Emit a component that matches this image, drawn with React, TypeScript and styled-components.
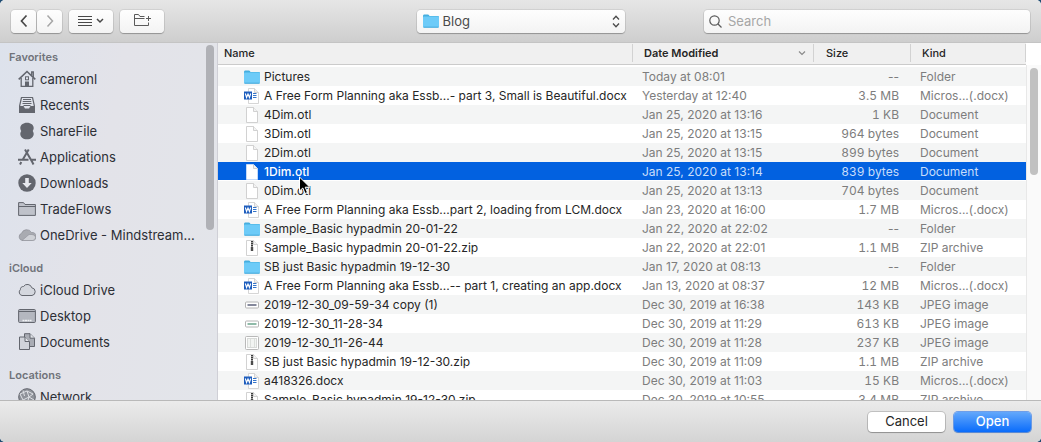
import React from "react";
import styled, { createGlobalStyle, css } from "styled-components";

const GlobalStyle = createGlobalStyle`
  * { box-sizing: border-box; }
  body {
    margin: 0;
    background: #1f4c72;
    font-family: Inter, "Liberation Sans", sans-serif;
    font-size: 12px;
    color: #262626;
  }
  button, select, input { font: inherit; color: inherit; margin: 0; }
  svg { display: block; flex: none; }
`;

const Dialog = styled.main`
  display: flex;
  flex-direction: column;
  height: 100vh;
  overflow: hidden;
  border-radius: 5px;
  background: #fff;
`;

const Toolbar = styled.header`
  display: grid;
  grid-template-columns: 1fr 208px 1fr;
  align-items: center;
  flex: none;
  height: 43px;
  padding: 0 11px;
  background: linear-gradient(#e6e6e6, #cecece);
  border-bottom: 1px solid #c4c4c4;
`;

const ToolGroup = styled.div`
  display: flex;
  align-items: center;
  gap: 7px;
`;

const Segmented = styled.div`
  display: flex;
  gap: 1px;
`;

const raised = css`
  height: 23px;
  border: 0;
  border-radius: 4px;
  background: linear-gradient(#fefefe, #f3f3f3);
  box-shadow: 0 0 0 1px rgba(0, 0, 0, 0.07), 0 1px 1px rgba(0, 0, 0, 0.25);
`;

const ToolButton = styled.button<{ $width: number }>`
  ${raised}
  display: flex;
  align-items: center;
  justify-content: center;
  gap: 4px;
  width: ${(p) => p.$width}px;
  padding: 0;
`;

const PathPicker = styled.label`
  ${raised}
  display: flex;
  align-items: center;
  gap: 4px;
  padding: 0 5px 0 6px;
`;

const PathSelect = styled.select`
  appearance: none;
  flex: 1;
  min-width: 0;
  padding: 0;
  border: 0;
  background: none;
  font-size: 13px;
  color: #4a4a4a;
  outline: none;
`;

const SearchBox = styled.label`
  ${raised}
  display: flex;
  align-items: center;
  justify-self: end;
  gap: 6px;
  width: 326px;
  max-width: 90%;
  padding: 0 5px;
`;

const SearchInput = styled.input`
  flex: 1;
  min-width: 0;
  padding: 0;
  border: 0;
  background: none;
  outline: none;
  font-size: 13px;
  &::placeholder { color: #a6a6a6; opacity: 1; }
`;

const Content = styled.div`
  display: flex;
  flex: 1;
  min-height: 0;
`;

const Sidebar = styled.nav`
  display: flex;
  flex: none;
  width: 218px;
  overflow: hidden;
  background: linear-gradient(100deg, #dde2ec, #e3e3e9 45%, #e3e5ea);
  border-right: 1px solid #cfcfd6;
`;

const Places = styled.div`
  flex: 1;
  min-width: 0;
  padding-top: 5px;
`;

const PlaceGroup = styled.section`
  margin-bottom: 11px;
`;

const PlaceHeading = styled.h2`
  margin: 0;
  padding-left: 9px;
  font-size: 11px;
  font-weight: 600;
  line-height: 18px;
  color: #70737a;
`;

const PlaceList = styled.ul`
  margin: 0;
  padding: 0;
  list-style: none;
`;

const PlaceLink = styled.a`
  display: flex;
  align-items: center;
  gap: 4px;
  height: 26px;
  padding-left: 18px;
  font-size: 13px;
  white-space: nowrap;
  color: #2d2f36;
  text-decoration: none;
`;

const SidebarThumb = styled.div`
  flex: none;
  width: 8px;
  height: 185px;
  margin: 2px 3px 0 0;
  border-radius: 4px;
  background: #b0b1b6;
`;

const FileArea = styled.div`
  flex: 1;
  min-width: 0;
  overflow: hidden;
`;

const FileTable = styled.table`
  width: 100%;
  table-layout: fixed;
  border-collapse: collapse;
`;

const HeadCell = styled.th`
  height: 24px;
  padding: 0 0 2px;
  text-align: left;
  font-size: 11px;
  font-weight: 500;
`;

const HeadLabel = styled.div<{ $inset: number; $sorted?: boolean }>`
  display: flex;
  align-items: center;
  justify-content: space-between;
  height: 22px;
  padding: 0 8px 2px ${(p) => p.$inset}px;
  font-weight: ${(p) => (p.$sorted ? 600 : 500)};
  background: linear-gradient(#d2d2d2, #d2d2d2) right 0 top 1px / 1px 18px no-repeat #f0f0f0;
  border-bottom: 1px solid #cbcbcb;
`;

const Row = styled.tr<{ $selected?: boolean }>`
  height: 19px;
  color: #7d7d7d;
  &:nth-child(odd) { background: #f4f5f5; }
  ${(p) =>
    p.$selected &&
    css`
      && { background: linear-gradient(#0261e0, #0261e0) 0 0 / 100% 18px no-repeat #fff; }
      color: #c8ddfa;
    `}
`;

const Cell = styled.td<{ $right?: boolean; $tabular?: boolean }>`
  padding: 0 ${(p) => (p.$right ? 12 : 0)}px 0 9px;
  line-height: 19px;
  text-align: ${(p) => (p.$right ? "right" : "left")};
  font-variant-numeric: ${(p) => (p.$tabular ? "tabular-nums" : "normal")};
  white-space: nowrap;
`;

const NameCell = styled.td`
  padding: 0 0 0 26px;
`;

const FileName = styled.div<{ $selected?: boolean }>`
  position: relative;
  display: flex;
  align-items: center;
  gap: 4px;
  height: 19px;
  white-space: nowrap;
  color: ${(p) => (p.$selected ? "#fff" : "#262626")};
  font-weight: ${(p) => (p.$selected ? 500 : 400)};
`;

const Pointer = styled.svg`
  position: absolute;
  left: 54px;
  top: 14px;
  z-index: 1;
`;

const ScrollColumn = styled.div`
  flex: none;
  width: 15px;
  padding-top: 22px;
  background: #fff;
`;

const ScrollTrack = styled.div`
  height: 100%;
  padding: 3px 3px 0;
  background: #fafafa;
  border-left: 1px solid #e8e8e8;
`;

const ScrollThumb = styled.div`
  height: 107px;
  border-radius: 4px;
  background: #c1c1c1;
`;

const Footer = styled.footer`
  display: flex;
  align-items: center;
  justify-content: flex-end;
  gap: 9px;
  flex: none;
  height: 42px;
  padding: 0 10px;
  background: linear-gradient(#ebebeb, #d4d4d4);
  border-top: 1px solid #b9b9b9;
`;

const FooterButton = styled.button<{ $primary?: boolean }>`
  width: 77px;
  height: 20px;
  padding: 0 0 2px;
  border: 0;
  border-radius: 4px;
  font-size: 13px;
  line-height: 18px;
  font-weight: ${(p) => (p.$primary ? 500 : 400)};
  color: ${(p) => (p.$primary ? "#fff" : "#262626")};
  background: ${(p) => (p.$primary ? "linear-gradient(#64a8fb, #0a6cfb)" : "#fff")};
  box-shadow: 0 0 0 1px ${(p) => (p.$primary ? "rgba(30, 110, 235, 0.6)" : "rgba(0, 0, 0, 0.16)")}, 0 1px 1px rgba(0, 0, 0, 0.2);
`;

type FileKind = "folder" | "word" | "doc" | "zip" | "wideDark" | "wideGreen" | "square";

const FolderIcon = () => (
  <svg width="16" height="16" viewBox="0 0 16 16">
    <path d="M0 3Q0 1.500 1 1.500H5Q6 1.500 6.500 3H15Q16 3 16 4V6H0Z" fill="#45aedf" />
    <rect y="3.500" width="16" height="11" rx="0.800" fill="#6dcbf8" />
    <path d="M0.500 14.200H15.500" stroke="#42a7da" />
  </svg>
);

const FileIcon = ({ kind, selected }: { kind: FileKind; selected?: boolean }) => {
  if (kind === "folder") return <FolderIcon />;
  if (kind === "word")
    return (
      <svg width="16" height="16" viewBox="0 0 16 16">
        <path d="M4.500 0.500H10.500L14.500 4.500V15.500H4.500Z" fill="#fff" stroke="#cbcbcb" strokeWidth="0.800" />
        <path d="M10.500 0.500V4.500H14.500" fill="#eee" stroke="#cbcbcb" strokeWidth="0.800" />
        <path d="M9 5.500H12.500M9 7.500H12.500M9 9.500H12.500" stroke="#3574c8" />
        <rect y="3.500" width="8" height="8" fill="#1c5cbd" />
        <path d="M1.300 5.500L2.600 9.500L4 5.900L5.400 9.500L6.700 5.500" fill="none" stroke="#fff" strokeWidth="1.100" />
      </svg>
    );
  if (kind === "doc" || kind === "zip")
    return (
      <svg width="16" height="16" viewBox="0 0 16 16">
        <path d="M2.500 0.500H9.500L13.500 4.500V15.500H2.500Z" fill="#fff" stroke={selected ? "#d5e4fa" : "#c6c6c6"} strokeWidth="0.800" />
        <path d="M9.500 0.500V4.500H13.500" fill="#f3f3f3" stroke="#c6c6c6" strokeWidth="0.800" />
        {kind === "zip" && (
          <>
            <path d="M8 1V8" stroke="#3d3d3d" strokeWidth="2" strokeDasharray="1.500 0.500" />
            <rect x="6.800" y="7" width="2.400" height="4" fill="#4c4c4c" />
          </>
        )}
      </svg>
    );
  if (kind === "square")
    return (
      <svg width="16" height="16" viewBox="0 0 16 16">
        <rect x="1.500" y="1.500" width="13" height="13" rx="1" fill="#fff" stroke="#b9b9b9" />
        <rect x="3.500" y="3.500" width="9" height="9" fill="#f2f4f2" stroke="#d8dad8" />
        <path d="M6.500 4V12M10.500 4V12" stroke="#dcdfdc" />
      </svg>
    );
  return (
    <svg width="16" height="16" viewBox="0 0 16 16">
      <rect x="1.500" y="5" width="13" height="6" rx="1" fill="#fff" stroke="#b4b4b4" />
      <path d="M3.500 8H12.500" stroke={kind === "wideDark" ? "#4f5570" : "#5f9d83"} strokeWidth="1.400" />
    </svg>
  );
};

const INK = "#63666e";

const HomeIcon = () => (
  <svg width="18" height="18" viewBox="0 0 18 18" fill="none" stroke={INK}>
    <path d="M0.700 9.300L9 1.500L17.300 9.300" strokeWidth="1.600" />
    <path d="M13.700 5.500V2H15.300V7" strokeWidth="1.300" />
    <path d="M3.200 8V16.300H14.800V8" strokeWidth="1.300" />
    <rect x="7.500" y="6.800" width="3" height="3" />
    <rect x="7" y="11.500" width="4" height="5" fill={INK} stroke="none" />
  </svg>
);
const RecentsIcon = () => (
  <svg width="18" height="18" viewBox="0 0 18 18" fill="none" stroke={INK}>
    <path d="M3.500 1.500H14.500L16.400 10V16.400H1.600V10Z" strokeWidth="1.200" strokeLinejoin="round" />
    <path d="M1.500 10.500H5.500L6.500 13H11.500L12.500 10.500H16.500V16.500H1.500Z" fill={INK} />
    <path d="M5 3.500H13M4.700 5.500H13.300M4.500 7.500H13.500M5.500 9.500H12.500" />
  </svg>
);
const ShareFileIcon = () => (
  <svg width="18" height="18" viewBox="0 0 18 18" fill={INK}>
    <path d="M9 0.700C13 0.700 15.700 3 15.700 6C15.700 7.500 15.100 8.400 14.700 9C15.100 9.600 15.700 10.500 15.700 12C15.700 15 13 17.300 9 17.300S2.300 15 2.300 12C2.300 10.500 2.900 9.600 3.300 9C2.900 8.400 2.300 7.500 2.300 6C2.300 3 5 0.700 9 0.700Z" />
  </svg>
);
const ApplicationsIcon = () => (
  <svg width="18" height="18" viewBox="0 0 18 18" fill="none" stroke={INK} strokeWidth="2">
    <path d="M7 1.500L14.500 14.500L15.500 16.500M10.700 1.500L4.500 12M0 11.700H10.500M13 11.700H18M3.300 14L2 16.500" />
  </svg>
);
const DownloadsIcon = () => (
  <svg width="18" height="18" viewBox="0 0 18 18">
    <circle cx="9" cy="9" r="8.700" fill={INK} />
    <path d="M7.200 4H10.800V9H13.700L9 14L4.300 9H7.200Z" fill="#e6e8ee" />
  </svg>
);
const PlainFolderIcon = () => (
  <svg width="18" height="18" viewBox="0 0 18 18" stroke={INK}>
    <path d="M0.600 15.400V2.600H5.500L7 4.500H17.400V15.400Z" fill="#bfc2ca" />
    <path d="M0.600 6.500H17.400" />
  </svg>
);
const OneDriveIcon = () => (
  <svg width="18" height="18" viewBox="0 0 18 18">
    <path d="M4 14.500A3.800 3.800 0 0 1 3.500 7.300A5.500 5.500 0 0 1 13.500 6.500A4 4 0 0 1 14.500 14.500Z" fill="#a9abb1" stroke="#85878e" strokeWidth="0.600" />
    <path d="M4 14.500L11 8.500Q17.500 8 17.500 11.500Q17.500 14.500 14.500 14.500Z" fill="#cfd1d6" stroke="#8f9198" strokeWidth="0.600" />
  </svg>
);
const CloudIcon = () => (
  <svg width="18" height="18" viewBox="0 0 18 18">
    <path d="M4 14.500A3.400 3.400 0 0 1 2.400 8.600A2.800 2.800 0 0 1 5.500 5.500A4.600 4.600 0 0 1 13.800 6.800A3.900 3.900 0 0 1 14 14.500Z" fill="#d4d7de" stroke={INK} />
  </svg>
);
const DesktopIcon = () => (
  <svg width="18" height="18" viewBox="0 0 18 18">
    <rect x="0.600" y="2.500" width="16.800" height="13" rx="1" fill="#b4b7bf" stroke={INK} />
    <path d="M1 4.500H17" stroke={INK} />
    <path d="M4.500 13.500H13.500" stroke="#f0f1f4" strokeWidth="1.600" strokeDasharray="2 0.500" />
  </svg>
);
const DocumentsIcon = () => (
  <svg width="18" height="18" viewBox="0 0 18 18" stroke={INK}>
    <path d="M6.500 0.700H12L16.500 5.200V13.500H6.500Z" fill="#a9acb4" />
    <path d="M12 0.700V5.200H16.500" fill="#e3e5ea" />
    <path d="M1.500 4H7L11.500 8.500V16.500H1.500Z" fill="#d0d3da" />
    <path d="M7 4V8.500H11.500" fill="#e3e5ea" />
  </svg>
);
const NetworkIcon = () => (
  <svg width="18" height="18" viewBox="0 0 18 18" fill="none">
    <circle cx="9" cy="9" r="8.300" fill="#8f929a" stroke={INK} />
    <path d="M2 6L9 3L15 6L11 9L5 12L2 6M9 3L11 9L16 12M5 12L9 16L11 9M5 2.500L6.500 8" stroke="#dfe1e6" />
  </svg>
);

const placeGroups = [
  {
    title: "Favorites",
    places: [
      ["cameronl", HomeIcon],
      ["Recents", RecentsIcon],
      ["ShareFile", ShareFileIcon],
      ["Applications", ApplicationsIcon],
      ["Downloads", DownloadsIcon],
      ["TradeFlows", PlainFolderIcon],
      ["OneDrive - Mindstream...", OneDriveIcon],
    ],
  },
  {
    title: "iCloud",
    places: [
      ["iCloud Drive", CloudIcon],
      ["Desktop", DesktopIcon],
      ["Documents", DocumentsIcon],
    ],
  },
  { title: "Locations", places: [["Network", NetworkIcon]] },
] as { title: string; places: [string, React.FC][] }[];

const files: [string, FileKind, string, string, string][] = [
  ["Pictures", "folder", "Today at 08:01", "--", "Folder"],
  ["A Free Form Planning aka Essb...- part 3, Small is Beautiful.docx", "word", "Yesterday at 12:40", "3.5 MB", "Micros...(.docx)"],
  ["4Dim.otl", "doc", "Jan 25, 2020 at 13:16", "1 KB", "Document"],
  ["3Dim.otl", "doc", "Jan 25, 2020 at 13:15", "964 bytes", "Document"],
  ["2Dim.otl", "doc", "Jan 25, 2020 at 13:15", "899 bytes", "Document"],
  ["1Dim.otl", "doc", "Jan 25, 2020 at 13:14", "839 bytes", "Document"],
  ["0Dim.otl", "doc", "Jan 25, 2020 at 13:13", "704 bytes", "Document"],
  ["A Free Form Planning aka Essb...part 2, loading from LCM.docx", "word", "Jan 23, 2020 at 16:00", "1.7 MB", "Micros...(.docx)"],
  ["Sample_Basic hypadmin 20-01-22", "folder", "Jan 22, 2020 at 22:02", "--", "Folder"],
  ["Sample_Basic hypadmin 20-01-22.zip", "zip", "Jan 22, 2020 at 22:01", "1.1 MB", "ZIP archive"],
  ["SB just Basic hypadmin 19-12-30", "folder", "Jan 17, 2020 at 08:13", "--", "Folder"],
  ["A Free Form Planning aka Essb...-- part 1, creating an app.docx", "word", "Jan 13, 2020 at 08:37", "12 MB", "Micros...(.docx)"],
  ["2019-12-30_09-59-34 copy (1)", "wideDark", "Dec 30, 2019 at 16:38", "143 KB", "JPEG image"],
  ["2019-12-30_11-28-34", "wideGreen", "Dec 30, 2019 at 11:29", "613 KB", "JPEG image"],
  ["2019-12-30_11-26-44", "square", "Dec 30, 2019 at 11:28", "237 KB", "JPEG image"],
  ["SB just Basic hypadmin 19-12-30.zip", "zip", "Dec 30, 2019 at 11:09", "1.1 MB", "ZIP archive"],
  ["a418326.docx", "word", "Dec 30, 2019 at 11:03", "15 KB", "Micros...(.docx)"],
  ["Sample_Basic hypadmin 19-12-30.zip", "zip", "Dec 30, 2019 at 10:55", "3.4 MB", "ZIP archive"],
];

export default function App() {
  return (
    <>
      <GlobalStyle />
      <Dialog>
        <Toolbar>
          <ToolGroup>
            <Segmented>
              <ToolButton $width={25} aria-label="Back">
                <svg width="8" height="14" viewBox="0 0 8 14" fill="none" stroke="#484848" strokeWidth="1.700"><path d="M6.500 1.500L1.500 7L6.500 12.500" /></svg>
              </ToolButton>
              <ToolButton $width={25} aria-label="Forward">
                <svg width="8" height="14" viewBox="0 0 8 14" fill="none" stroke="#a6a6a6" strokeWidth="1.500"><path d="M1.500 1.500L6.500 7L1.500 12.500" /></svg>
              </ToolButton>
            </Segmented>
            <ToolButton $width={44} aria-label="View options">
              <svg width="14" height="11" viewBox="0 0 14 11" stroke="#484848"><path d="M0 0.500H14M0 3.500H14M0 6.500H14M0 9.500H14" /></svg>
              <svg width="8" height="6" viewBox="0 0 8 6" fill="none" stroke="#484848" strokeWidth="1.500"><path d="M1 1L4 4L7 1" /></svg>
            </ToolButton>
            <ToolButton $width={44} aria-label="New folder">
              <svg width="18" height="14" viewBox="0 0 18 14" fill="none" stroke="#5a5a5a">
                <path d="M11.500 2.500H7L5.500 0.500H1.500V11.500H15.500V8.500M1.500 4.500H11.500M15.500 2V7M13 4.500H18" />
              </svg>
            </ToolButton>
          </ToolGroup>
          <PathPicker>
            <FolderIcon />
            <PathSelect aria-label="Folder" defaultValue="Blog">
              <option>Blog</option>
            </PathSelect>
            <svg width="8" height="13" viewBox="0 0 8 13" fill="none" stroke="#4a4a4a" strokeWidth="1.300"><path d="M1 4.500L4 1.300L7 4.500M1 8.500L4 11.700L7 8.500" /></svg>
          </PathPicker>
          <SearchBox>
            <svg width="13" height="13" viewBox="0 0 13 13" fill="none" stroke="#5a5a5a" strokeWidth="1.200"><circle cx="5.500" cy="5.500" r="4.700" /><path d="M9 9L12.500 12.500" /></svg>
            <SearchInput aria-label="Search" placeholder="Search" />
          </SearchBox>
        </Toolbar>
        <Content>
          <Sidebar aria-label="Places">
            <Places>
              {placeGroups.map((group) => (
                <PlaceGroup key={group.title}>
                  <PlaceHeading>{group.title}</PlaceHeading>
                  <PlaceList>
                    {group.places.map(([name, Icon]) => (
                      <li key={name}><PlaceLink href="#"><Icon />{name}</PlaceLink></li>
                    ))}
                  </PlaceList>
                </PlaceGroup>
              ))}
            </Places>
            <SidebarThumb />
          </Sidebar>
          <FileArea>
            <FileTable>
              <colgroup>
                <col />
                <col style={{ width: 181 }} />
                <col style={{ width: 97 }} />
                <col style={{ width: 115 }} />
              </colgroup>
              <thead>
                <tr>
                  <HeadCell scope="col"><HeadLabel $inset={6}>Name</HeadLabel></HeadCell>
                  <HeadCell scope="col" aria-sort="descending">
                    <HeadLabel $inset={11} $sorted>
                      Date Modified
                      <svg width="8" height="6" viewBox="0 0 8 6" fill="none" stroke="#8a8a8a" strokeWidth="1.200"><path d="M1 1.500L4 4.500L7 1.500" /></svg>
                    </HeadLabel>
                  </HeadCell>
                  <HeadCell scope="col"><HeadLabel $inset={12}>Size</HeadLabel></HeadCell>
                  <HeadCell scope="col"><HeadLabel $inset={11}>Kind</HeadLabel></HeadCell>
                </tr>
              </thead>
              <tbody>
                {files.map(([name, icon, date, size, kind]) => {
                  const selected = name === "1Dim.otl";
                  return (
                    <Row key={name} $selected={selected} aria-selected={selected}>
                      <NameCell>
                        <FileName $selected={selected}>
                          <FileIcon kind={icon} selected={selected} />
                          {name}
                          {selected && (
                            <Pointer width="14" height="20" viewBox="0 0 14 20" aria-hidden="true">
                              <path d="M1.500 1V15L4.800 12L7 17.500L9.500 16.500L7.200 11.200H11.800Z" fill="#000" stroke="#fff" />
                            </Pointer>
                          )}
                        </FileName>
                      </NameCell>
                      <Cell>{date}</Cell>
                      <Cell $right $tabular={size !== "--"}>{size}</Cell>
                      <Cell>{kind}</Cell>
                    </Row>
                  );
                })}
              </tbody>
            </FileTable>
          </FileArea>
          <ScrollColumn>
            <ScrollTrack><ScrollThumb /></ScrollTrack>
          </ScrollColumn>
        </Content>
        <Footer>
          <FooterButton>Cancel</FooterButton>
          <FooterButton $primary>Open</FooterButton>
        </Footer>
      </Dialog>
    </>
  );
}
